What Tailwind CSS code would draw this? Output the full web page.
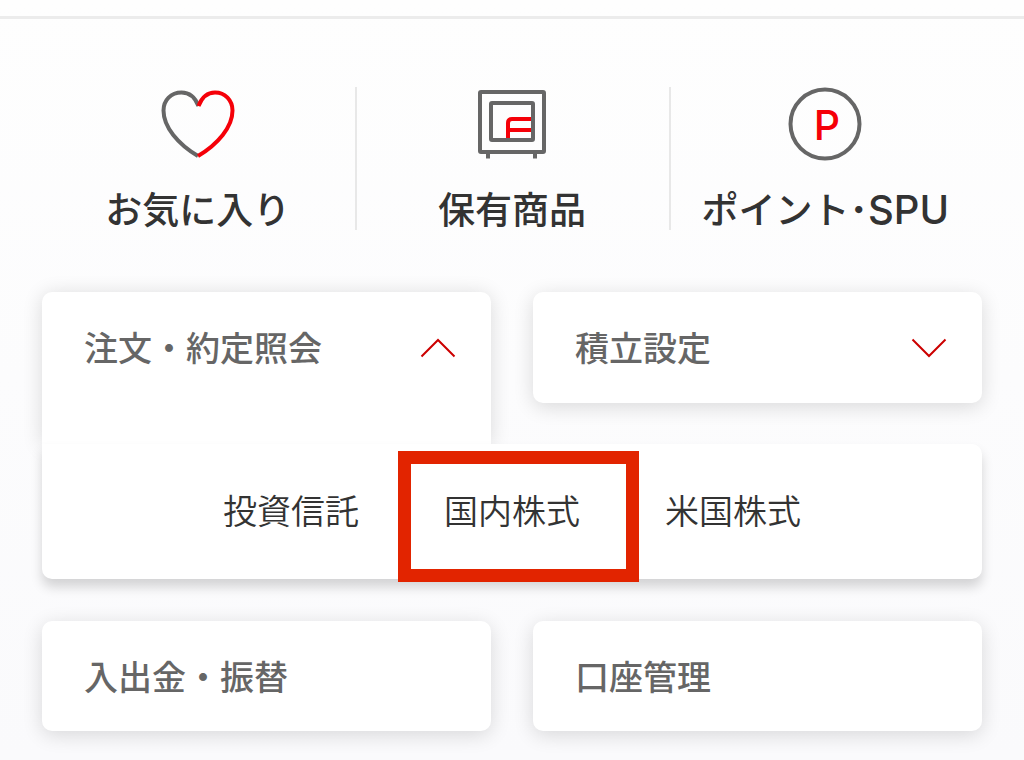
<!DOCTYPE html>
<html lang="ja">
<head>
<meta charset="utf-8">
<meta name="viewport" content="width=device-width, initial-scale=1">
<title>メニュー</title>
<script src="https://cdn.jsdelivr.net/npm/@tailwindcss/browser@4"></script>
</head>
<body class="min-h-screen overflow-x-hidden bg-linear-to-b from-[#fefefe] to-[#fafafc] font-['Noto_Sans_CJK_JP',sans-serif] text-[#333]">
  <div class="h-4"></div>
  <hr class="border-t-3 border-[#ececec]">
  <main class="px-[42px] pt-[68px] pb-7">
    <nav class="grid grid-cols-3 text-[37px] leading-[42px] font-medium whitespace-nowrap">
      <a href="#favorites" class="flex flex-col items-center gap-[26px] pr-[2px]">
        <svg class="h-[74px] w-[74px] shrink-0" viewBox="0 0 74 74" fill="none" stroke-width="4" aria-hidden="true">
          <path stroke="#666" d="M37.500 19C34 10 28 5.500 20.500 5.500C10 5.500 2.500 13 2.500 23.500C2.500 40 17 57 37 69"/>
          <path stroke="#f50008" d="M37.500 19C41 10 47 5.500 54 5.500C64 5.500 71.500 13 71.500 23.500C71.500 40 57 57 37 69"/>
        </svg>
        <span>お気に入り</span>
      </a>
      <a href="#holdings" class="flex flex-col items-center gap-[26px] border-l-2 border-[#e8e8e8] pr-[2px]">
        <svg class="h-[74px] w-[74px] shrink-0" viewBox="0 0 74 74" fill="none" stroke-width="4" aria-hidden="true">
          <path stroke="#f50008" d="M56 32H37Q33 32 33 36V52M33 43H56"/>
          <rect x="16" y="16" width="42" height="37" rx="1" stroke="#666"/>
          <rect x="5" y="5" width="64" height="60" rx="1" stroke="#666"/>
          <path stroke="#666" d="M13 65V71.500M60 65V71.500"/>
        </svg>
        <span>保有商品</span>
      </a>
      <a href="#points" class="flex flex-col items-center gap-[26px] border-l-2 border-[#e8e8e8] pr-[2px]">
        <svg class="h-[74px] w-[74px] shrink-0" viewBox="0 0 74 74" fill="none" aria-hidden="true">
          <circle cx="37" cy="37" r="34.500" stroke="#666" stroke-width="4"/>
          <text x="39" y="53" text-anchor="middle" fill="#f50008" class="font-['Inter',sans-serif] text-[41px] font-medium">P</text>
        </svg>
        <span>ポイント<span class="font-bold">･</span><span class="font-['Inter',sans-serif] text-[40px] leading-none font-medium">SPU</span></span>
      </a>
    </nav>

    <div class="mt-[62px] grid grid-cols-2 items-start gap-x-[42px] text-[34px] leading-[50px] font-medium text-[#666]">
      <button type="button" aria-expanded="true" aria-controls="orders" class="flex h-[152px] items-start justify-between rounded-t-[10px] bg-white px-[42px] pt-[30px] shadow-[0_2px_20px_rgba(0,0,0,0.14)]">
        <span>注文・約定照会</span>
        <svg class="-mr-[7px] mt-4 h-5 w-[36px]" viewBox="0 0 36 20" fill="none" stroke="#cc0000" stroke-width="2" aria-hidden="true"><path d="M1.500 18.500L18 2L34.500 18.500"/></svg>
      </button>
      <button type="button" aria-expanded="false" class="flex h-[111px] items-start justify-between rounded-[10px] bg-white px-[42px] pt-[30px] shadow-[0_4px_20px_rgba(0,0,0,0.14)]">
        <span>積立設定</span>
        <svg class="-mr-[7px] mt-4 h-5 w-[36px]" viewBox="0 0 36 20" fill="none" stroke="#cc0000" stroke-width="2" aria-hidden="true"><path d="M1.500 1.500L18 18L34.500 1.500"/></svg>
      </button>
      <div id="orders" class="relative col-span-2 flex h-[135px] items-center justify-center gap-[85px] rounded-b-[10px] rounded-tr-[10px] bg-white pb-1 font-[350] text-[#333] shadow-[0_8px_12px_rgba(0,0,0,0.16)]">
        <a href="#funds">投資信託</a>
        <a href="#domestic" class="relative">国内株式<span class="pointer-events-none absolute -top-[34px] -left-[46px] h-[131px] w-[241px] border-[13px] border-[#e22400]"></span></a>
        <a href="#us">米国株式</a>
      </div>
      <button type="button" class="mt-[42px] flex h-[110px] items-start rounded-[10px] bg-white px-[42px] pt-[30px] shadow-[0_4px_20px_rgba(0,0,0,0.14)]">入出金・振替</button>
      <button type="button" class="mt-[42px] flex h-[110px] items-start rounded-[10px] bg-white px-[42px] pt-[30px] shadow-[0_4px_20px_rgba(0,0,0,0.14)]">口座管理</button>
    </div>
  </main>
</body>
</html>
